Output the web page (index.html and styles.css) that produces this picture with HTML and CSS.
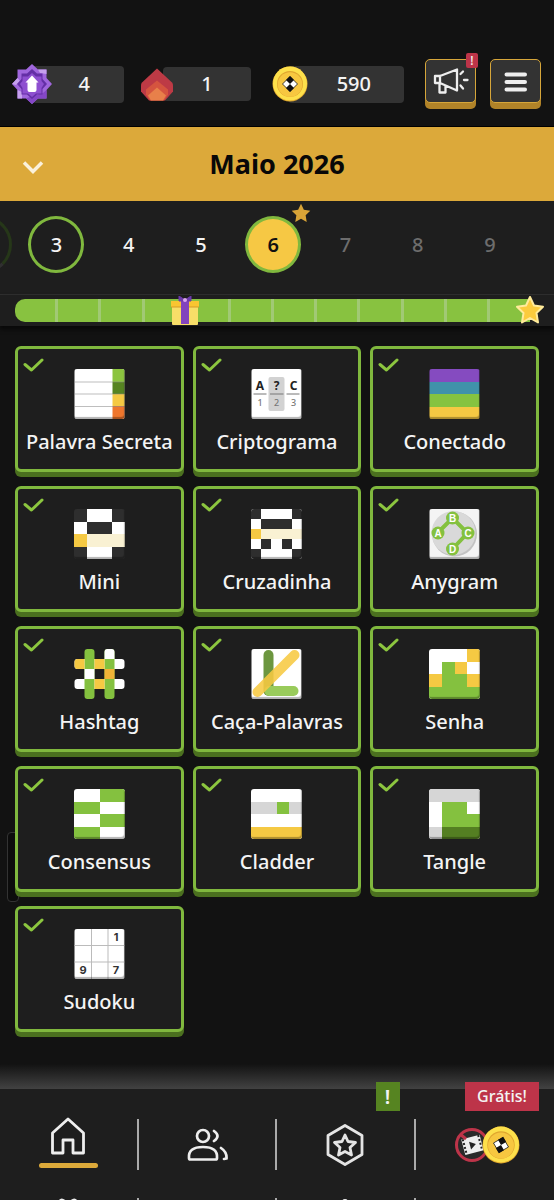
FILE: index.html
```html
<!DOCTYPE html>
<html lang="pt">
<head>
<meta charset="utf-8">
<meta name="viewport" content="width=device-width, initial-scale=1">
<title>Maio 2026</title>
<link rel="stylesheet" href="styles.css">
</head>
<body>
<svg class="defs" aria-hidden="true">
  <symbol id="check" viewBox="0 0 21 14"><path d="M2 6.500 L8.500 12 L19 2" fill="none" stroke="#8cc63f" stroke-width="3" stroke-linecap="round" stroke-linejoin="round"/></symbol>
  <symbol id="coin" viewBox="0 0 36 36">
    <circle cx="18" cy="18" r="17.500" fill="#dfa62d"/><circle cx="18" cy="17.500" r="17" fill="#fde04b"/>
    <circle cx="18" cy="18" r="13" fill="#e0a62f"/><circle cx="18" cy="18.500" r="12.300" fill="#f7c740"/>
  </symbol>
  <symbol id="star" viewBox="0 0 28 28"><path d="M14 1 L18 9.500 L27 10.700 L20.500 17 L22 26.500 L14 22 L6 26.500 L7.500 17 L1 10.700 L10 9.500Z" stroke-linejoin="round"/></symbol>
</svg>
<div class="app">
  <header class="topbar">
    <div class="stat">
      <svg class="stat-icon wide" viewBox="0 0 40 40"><path d="M20 0 L26 5.500 H34.500 V14 L40 20 L34.500 26 V34.500 H26 L20 40 L14 34.500 H5.500 V26 L0 20 L5.500 14 V5.500 H14Z" fill="#a066dd"/><path d="M34.500 26 V34.500 H26 L20 40 L14 34.500 L20 32 L31 29Z" fill="#8547c7"/><path d="M26 5.500 H34.500 V10 L28 9Z M5.500 26 V34.500 H10 L10 28Z M0 20 L5.500 14 L8 17 L4 21Z" fill="#c6a0ee"/><path d="M20 5 L25 9.500 H30.500 V15 L35 20 L30.500 25 V30.500 H25 L20 35 L15 30.500 H9.500 V25 L5 20 L9.500 15 V9.500 H15Z" fill="#642fa6"/><path d="M20 9 L24 12.500 H29.500 V17 L32 20 L29.500 24 V29.500 H24 L20 33 L16 29.500 H10.500 V24 L8 20 L10.500 17 V12.500 H16Z" fill="#8e4fd0"/><path d="M20 11.500 L26.500 18.500 H24.500 V26 Q24.500 28 22.500 28 H17.500 Q15.500 28 15.500 26 V18.500 H13.500Z" fill="#fff"/></svg>
      <span class="stat-value">4</span>
    </div>
    <div class="stat short">
      <svg class="stat-icon" viewBox="0 0 32 32"><path d="M16 0 L31 14 Q32 15 32 17 V23 L24 32 H8 L0 23 V17 Q0 15 1 14Z" fill="#bd3a45"/><path d="M16 12 L27 21 V26 L23 32 H9 L5 26 V21Z" fill="#d5543f"/><path d="M16 19 L25 27 L22 32 H10 L7 27Z" fill="#e8804a"/></svg>
      <span class="stat-value">1</span>
    </div>
    <div class="stat large">
      <svg class="stat-icon" viewBox="0 0 36 36"><use href="#coin"/><path d="M18 10.500 L25.500 18 L18 25.500 L10.500 18Z" fill="#fff" stroke="#111" stroke-width=".8"/><path d="M18 10 L22 14 L18 18 L14 14Z M18 18 L22 22 L18 26 L14 22Z" fill="#111"/></svg>
      <span class="stat-value">590</span>
    </div>
    <div class="actions">
      <button class="square" aria-label="Novidades">
        <svg viewBox="0 0 36 28"><g fill="none" stroke="#eee" stroke-width="2.300" stroke-linejoin="round" stroke-linecap="round"><path d="M2 9 H7 V16 H2Z M7 9 L24 2.500 V23.500 L7 16 M6.500 17 V25.500 H12.500 V19"/><path d="M27.500 7 L30 4.500 M31 13 H34.500 M27.500 18.500 L30 21.500"/></g></svg>
        <span class="alert">!</span>
      </button>
      <button class="square" aria-label="Menu">
        <svg viewBox="0 0 36 28"><path d="M8.500 7.500 H27 M8.500 15 H27 M8.500 22.500 H27" stroke="#eee" stroke-width="4" stroke-linecap="round"/></svg>
      </button>
    </div>
  </header>

  <section class="month">
    <button class="month-toggle" aria-label="Abrir calendário"><svg viewBox="0 0 22 15"><path d="M2 2.500 L11 11.500 L20 2.500" fill="none" stroke="#faf1dc" stroke-width="3.500"/></svg></button>
    <h1>Maio 2026</h1>
  </section>

  <nav class="days" aria-label="Dias">
    <button class="day past" aria-label="2"></button>
    <button class="day done">3</button>
    <button class="day">4</button>
    <button class="day">5</button>
    <button class="day today">6<svg class="day-star" viewBox="0 0 28 28"><use href="#star" fill="#d9a437"/></svg></button>
    <button class="day future">7</button>
    <button class="day future">8</button>
    <button class="day future">9</button>
  </nav>

  <section class="progress">
    <div class="bar"><i></i><i></i><i></i><i></i><i></i><i></i><i></i><i></i><i></i><i></i><i></i><i></i></div>
    <svg class="gift" viewBox="0 0 28 30"><path d="M1 9 H27 V28 Q27 29 26 29 H2 Q1 29 1 28Z" fill="#f8de68"/><path d="M0 5 H28 V11 H0Z" fill="#fac531"/><path d="M0 10.500 H28 V11.500 H0Z" fill="#d79a28"/><path d="M10 5 H18 V28 H10Z" fill="#8243bd"/><path d="M14 4 L8 0 V5 H12Z M14 4 L20 0 V5 H16Z" fill="#6c3baa" stroke="#6c3baa" stroke-linejoin="round"/><circle cx="14" cy="4" r="2" fill="#dba6ee"/></svg>
    <svg class="goal" viewBox="0 0 28 28"><use href="#star" fill="#fbcb3d" stroke="#ffeb9b" stroke-width="2"/></svg>
  </section>

  <main class="games">
    <a class="card" href="#"><svg class="check"><use href="#check"/></svg>
      <span class="tile"><svg viewBox="0 0 50 50"><path fill="#fff" d="M0 0H50V50H0z"/><path fill="#8cc43f" d="M38 0H50V13H38z"/><path fill="#568421" d="M38 13H50V25H38z"/><path fill="#f5c943" d="M38 25H50V37H38z"/><path fill="#ee762d" d="M38 37H50V50H38z"/><path d="M0 13H50M0 25H50M0 37.500H50" stroke="#888" stroke-opacity=".55"/></svg></span><span>Palavra Secreta</span></a>
    <a class="card" href="#"><svg class="check"><use href="#check"/></svg>
      <span class="tile"><svg viewBox="0 0 50 50"><path fill="#fff" d="M0 0H50V50H0z"/><rect x="17" y="8" width="16" height="34" rx="2" fill="#d2d2d2"/><path d="M2 25H15M18.500 25H32M35 25H48" stroke="#777"/><g text-anchor="middle" class="glyphs"><text x="8.500" y="21">A</text><text x="25" y="21">?</text><text x="42" y="21">C</text></g><g text-anchor="middle" class="digits"><text x="8.500" y="37">1</text><text x="25" y="37">2</text><text x="42" y="37">3</text></g></svg></span><span>Criptograma</span></a>
    <a class="card" href="#"><svg class="check"><use href="#check"/></svg>
      <span class="tile"><svg viewBox="0 0 50 50"><path fill="#854bc0" d="M0 0H50V13H0z"/><path fill="#4092aa" d="M0 13H50V25H0z"/><path fill="#85c340" d="M0 25H50V38H0z"/><path fill="#f5c943" d="M0 38H50V50H0z"/></svg></span><span>Conectado</span></a>

    <a class="card" href="#"><svg class="check"><use href="#check"/></svg>
      <span class="tile"><svg viewBox="0 0 4 4" preserveAspectRatio="none" shape-rendering="crispEdges"><path fill="#2e2e2e" d="M0 0H4V4H0z"/><path fill="#fff" d="M1 0H3V1H1zM0 1H1V2H0zM3 1H4V2H3zM1 3H3V4H1z"/><path fill="#f5c943" d="M0 2H1V3H0z"/><path fill="#f9f1d3" d="M1 2H4V3H1z"/></svg></span><span>Mini</span></a>
    <a class="card" href="#"><svg class="check"><use href="#check"/></svg>
      <span class="tile"><svg viewBox="0 0 5 5" preserveAspectRatio="none" shape-rendering="crispEdges"><path fill="#fff" d="M0 0H5V5H0z"/><path fill="#2e2e2e" d="M0 0H1V1H0zM4 0H5V1H4zM1 1H4V2H1zM1 3H2V4H1zM3 3H4V4H3zM0 4H1V5H0zM4 4H5V5H4z"/><path fill="#f5c943" d="M0 2H1V3H0z"/><path fill="#f9f1d3" d="M1 2H5V3H1z"/></svg></span><span>Cruzadinha</span></a>
    <a class="card" href="#"><svg class="check"><use href="#check"/></svg>
      <span class="tile"><svg viewBox="0 0 50 50"><path fill="#f4f4f4" d="M0 0H50V50H0z"/><circle cx="25" cy="25" r="22.500" fill="#c3c3c3"/><circle cx="24" cy="24" r="22" fill="#d9d9d9"/><path d="M8 24 L23 9 L38 24 L23 40" fill="none" stroke="#84c13f" stroke-width="4"/><g fill="#84c13f"><circle cx="8.500" cy="24" r="6.500"/><circle cx="23" cy="9" r="6.500"/><circle cx="38.500" cy="24" r="6.500"/><circle cx="23" cy="40" r="6.500"/></g><g text-anchor="middle" class="nodes"><text x="8.500" y="27.500">A</text><text x="23" y="12.500">B</text><text x="38.500" y="27.500">C</text><text x="23" y="43.500">D</text></g></svg></span><span>Anygram</span></a>

    <a class="card" href="#"><svg class="check"><use href="#check"/></svg>
      <span class="tile bare"><svg viewBox="0 0 50 50"><rect y="10" width="50" height="10" rx="3" fill="#fff"/><rect y="30" width="50" height="10" rx="3" fill="#fff"/><rect x="10" width="10" height="50" rx="3" fill="#84c13f"/><rect x="30" width="10" height="50" rx="3" fill="#84c13f"/><path fill="#fff" d="M10 20H20V30H10zM30 10V3Q30 0 33 0H37Q40 0 40 3V10z"/><path fill="#f5c943" d="M10 10H3Q0 10 0 13V17Q0 20 3 20H10zM20 10H30V20H20zM20 30H30V40H20z"/><path fill="#f0b437" d="M30 20H40V30H30z"/></svg></span><span>Hashtag</span></a>
    <a class="card" href="#"><svg class="check"><use href="#check"/></svg>
      <span class="tile"><svg viewBox="0 0 50 50"><path fill="#fff" d="M0 0H50V50H0z"/><g fill="none" stroke-linecap="round" stroke-width="10"><path d="M17 6V42" stroke="#6c963f"/><path d="M18 42H42" stroke="#99cb5b"/><path d="M6 43L43 6" stroke="#f7c942" stroke-opacity=".88"/></g></svg></span><span>Caça-Palavras</span></a>
    <a class="card" href="#"><svg class="check"><use href="#check"/></svg>
      <span class="tile"><svg viewBox="0 0 4 4" preserveAspectRatio="none" shape-rendering="crispEdges"><path fill="#fff" d="M0 0H4V4H0z"/><path fill="#f5c943" d="M3 0H4V1H3zM2 1H3V2H2zM0 2H1V3H0zM3 2H4V3H3z"/><path fill="#84c13f" d="M1 1H2V2H3V3H4V4H0V3H1z"/></svg></span><span>Senha</span></a>

    <a class="card" href="#"><svg class="check"><use href="#check"/></svg>
      <span class="tile"><svg viewBox="0 0 4 4" preserveAspectRatio="none" shape-rendering="crispEdges"><path fill="#fff" d="M0 0H4V4H0z"/><path fill="#84c13f" d="M2 0H4V1H2zM0 1H2V2H0zM2 2H4V3H2zM0 3H2V4H0z"/></svg></span><span>Consensus</span></a>
    <a class="card" href="#"><svg class="check"><use href="#check"/></svg>
      <span class="tile"><svg viewBox="0 0 4 4" preserveAspectRatio="none" shape-rendering="crispEdges"><path fill="#fff" d="M0 0H4V4H0z"/><path fill="#d6d6d6" d="M0 1H4V2H0z"/><path fill="#84c13f" d="M2 1H3V2H2z"/><path fill="#f5c943" d="M0 3H4V4H0z"/></svg></span><span>Cladder</span></a>
    <a class="card" href="#"><svg class="check"><use href="#check"/></svg>
      <span class="tile"><svg viewBox="0 0 4 4" preserveAspectRatio="none" shape-rendering="crispEdges"><path fill="#fff" d="M0 0H4V4H0z"/><path fill="#d6d6d6" d="M0 0H4V1H0zM0 3H1V4H0z"/><path fill="#84c13f" d="M1 1H3V2H4V3H1z"/><path fill="#547f22" d="M1 3H4V4H1z"/></svg></span><span>Tangle</span></a>

    <a class="card" href="#"><svg class="check"><use href="#check"/></svg>
      <span class="tile"><svg viewBox="0 0 50 50"><path fill="#fff" d="M0 0H50V50H0z"/><path d="M17 0V50M33.500 0V50M0 16.500H50M0 33H50" stroke="#bbb"/><g text-anchor="middle" class="cells"><text x="41.500" y="12">1</text><text x="8.500" y="45">9</text><text x="41.500" y="45">7</text></g></svg></span><span>Sudoku</span></a>
    <button class="drawer" aria-label="Abrir painel"></button>
  </main>

  <footer class="dock">
    <div class="fade"></div>
    <nav class="tabs">
      <a class="tab active" href="#" aria-label="Início"><svg viewBox="0 0 42 42"><path d="M5.500 37 V17 L21 3 L36.500 17 V37 H26 V24 H16 V37Z" fill="none" stroke="#eee" stroke-width="2.800" stroke-linejoin="round"/></svg></a>
      <a class="tab" href="#" aria-label="Amigos"><svg viewBox="0 0 42 42"><g fill="none" stroke="#eee" stroke-width="2.700" stroke-linecap="round"><circle cx="17" cy="12" r="6"/><path d="M3 34 Q2 23 17 23 Q32 23 31 34 Q31 35.500 29.500 35.500 H4.500 Q3 35.500 3 34Z"/><path d="M28 7 Q35 12 28 17 M35 24 Q41 28 40.500 34.500 L38 35"/></g></svg></a>
      <a class="tab" href="#" aria-label="Conquistas"><svg viewBox="0 0 42 42"><g fill="none" stroke="#e4e4e4" stroke-width="2.800" stroke-linejoin="round"><path d="M21 1.500 L38 11.500 V30.500 L21 40.500 L4 30.500 V11.500Z"/><path d="M21 11 L24 17.500 L31.500 18.500 L26 23.500 L27.500 31 L21 27.500 L14.500 31 L16 23.500 L10.500 18.500 L18 17.500Z"/></g></svg><span class="tag green">!</span></a>
      <a class="tab promo" href="#" aria-label="Sem anúncios"><svg viewBox="0 0 66 40"><circle cx="18" cy="20" r="15.500" fill="#292929" stroke="#bd3449" stroke-width="3"/><g transform="rotate(-15 18 20)"><path fill="#eee" d="M9 12H28V28H9z"/><path d="M10.500 12V28M26.500 12V28" stroke="#222" stroke-width="2" stroke-dasharray="2 2"/><path fill="#222" d="M16 16L22 20L16 24z"/></g><path d="M6 9L12 14" stroke="#bd3449" stroke-width="3"/><use href="#coin" x="28" y="1" width="38" height="38"/><g transform="translate(47 20) rotate(-30)"><path fill="#fff" stroke="#111" stroke-width=".7" d="M-5.500-5.500H5.500V5.500H-5.500z"/><path fill="#111" d="M0-6H6V0H0zM-6 0H0V6H-6z"/></g></svg><span class="tag red">Grátis!</span></a>
    </nav>
    <div class="peek" aria-hidden="true"><div><svg viewBox="0 0 20 4"><path d="M1 4Q3-1 8 4M12 4Q17-1 19 4" fill="none" stroke="#eee" stroke-width="2"/></svg></div><div></div><div><svg viewBox="0 0 20 4"><circle cx="10" cy="4" r="3" fill="#eee"/></svg></div><div></div></div>
  </footer>
</div>
</body>
</html>
```
FILE: styles.css
```css
* { box-sizing: border-box; }

body {
  margin: 0;
  background: #121212;
  color: #f4f4f4;
  font-family: "Noto Sans", "Open Sans", sans-serif;
  font-size: 20px;
  font-weight: 500;
}

button { padding: 0; border: 0; background: none; color: inherit; font: inherit; }
a { color: inherit; text-decoration: none; }
svg { display: block; }
.defs { position: absolute; width: 0; height: 0; }

.app { display: flex; flex-direction: column; height: 100vh; overflow: hidden; }

.topbar {
  display: flex;
  align-items: center;
  gap: 21px;
  padding: 59px 13px 17px 12px;
  border-bottom: 1px solid #000;
}
.stat { display: flex; align-items: center; flex: 112 1 0; }
.stat.short { flex-grow: 109; margin-left: -4px; }
.stat.large { flex-grow: 132; }
.stat-icon { position: relative; flex: none; width: 36px; height: 36px; }
.stat-icon.wide { width: 40px; height: 40px; }
.short .stat-icon { width: 32px; height: 33px; }
.stat-value {
  flex: 1;
  height: 37px;
  margin-left: -20px;
  padding-left: 12px;
  border-radius: 4px;
  background: #333;
  line-height: 35px;
  text-align: center;
}
.short .stat-value { height: 34px; margin-left: -10px; padding-left: 0; line-height: 34px; }
.large .stat-value { padding-left: 16px; }
.actions { display: flex; gap: 14px; }
.square {
  position: relative;
  display: grid;
  place-items: center;
  width: 51px;
  height: 44px;
  margin-bottom: 6px;
  border: 1px solid #d6a63a;
  border-radius: 5px;
  background: #333;
  box-shadow: 0 6px 0 #b18328;
}
.square svg { width: 36px; height: 28px; }
.alert {
  position: absolute;
  top: -7px;
  right: -3px;
  width: 12px;
  height: 15px;
  border-radius: 2px;
  background: #bd3449;
  font-size: 12px;
  line-height: 15px;
}

.month {
  display: grid;
  grid-template-columns: 66px 1fr 66px;
  align-items: center;
  height: 74px;
  flex: none;
  background: #dca93a;
}
.month-toggle { justify-self: center; }
.month-toggle svg { width: 22px; height: 15px; margin-top: 6px; }
.month h1 { margin: 0; color: #080808; font-size: 27px; font-weight: 700; line-height: 36px; text-align: center; }

.days {
  display: flex;
  flex: none;
  height: 94px;
  padding: 15px 28px 0 0;
  margin-left: -52px;
  background: #1e1e1e;
  border-bottom: 1px solid #303030;
}
.day { position: relative; flex: 1; height: 57px; line-height: 57px; }
.day.past::before, .day.done::before, .day.today::before {
  content: "";
  position: absolute;
  z-index: 0;
  inset: 0 calc(50% - 28px);
  border: 3px solid #80b83e;
  border-radius: 50%;
}
.day.past::before { border-color: #263719 #263719 #303030; }
.day.today { color: #111; font-weight: 600; isolation: isolate; }
.day.today::before { z-index: -1; background: #f6c844; }
.day.future { color: #6d6d6d; }
.day-star { position: absolute; top: -13px; left: calc(50% + 18px); width: 20px; height: 20px; }

.progress {
  position: relative;
  flex: none;
  padding: 4px 24px 4px 15px;
  background: #1e1e1e;
  box-shadow: 0 3px 4px #080808;
}
.bar { display: flex; height: 23px; overflow: hidden; border-radius: 10px 0 0 10px; background: #88c240; }
.bar i { flex: 1; border-right: 3px solid #a1c975; }
.bar i:last-child { border: 0; }
.gift { position: absolute; top: 1px; left: calc(33.33% - 14px); width: 28px; height: 30px; }
.goal { position: absolute; top: 1px; right: 10px; width: 28px; height: 28px; }

.games {
  position: relative;
  display: grid;
  grid-template-columns: repeat(3, 1fr);
  align-content: start;
  flex: 1;
  gap: 14px 9px;
  min-height: 0;
  padding: 20px 15px;
}
.card {
  position: relative;
  z-index: 1;
  display: flex;
  flex-direction: column;
  align-items: center;
  gap: 7px;
  height: 126px;
  padding-top: 20px;
  border: 3px solid #80b83e;
  border-radius: 6px;
  background: #1e1e1e;
  box-shadow: 0 5px 0 #4b701f;
  line-height: 32px;
  white-space: nowrap;
}
.check { position: absolute; top: 9px; left: 5px; width: 21px; height: 14px; }
.tile { position: relative; width: 51px; height: 50px; overflow: hidden; border-radius: 3px; }
.tile svg { width: 100%; height: 100%; }
.tile::after { content: ""; position: absolute; inset: 0; border-radius: 3px; box-shadow: inset -1px -2px 1px rgba(0, 0, 0, .3); }
.tile.bare::after { display: none; }
.glyphs { fill: #222; font-size: 12px; font-weight: 700; }
.digits { fill: #777; font-size: 9px; }
.nodes { fill: #fff; font-family: "Liberation Sans", sans-serif; font-size: 10px; font-weight: 700; }
.cells { fill: #333; font-family: Inter, sans-serif; font-size: 11px; font-weight: 700; }
.drawer {
  position: absolute;
  bottom: 162px;
  left: 7px;
  width: 12px;
  height: 70px;
  border: 1px solid #333;
  border-radius: 4px;
  background: #0c0c0c;
}

.dock { position: relative; z-index: 2; flex: none; background: #1e1e1e; }
.fade { height: 25px; background: linear-gradient(#121212, #424242); }
.tabs { display: grid; grid-template-columns: repeat(4, 1fr); padding: 30px 0 28px; }
.tab { position: relative; display: grid; place-items: center; height: 51px; border-right: 2px solid #aaa; }
.tab:last-child { border: 0; }
.tab svg { width: 42px; height: 42px; }
.tab.active { align-items: start; }
.tab.active svg { margin-top: -3px; }
.tab.active::after { content: ""; position: absolute; bottom: 2px; width: 59px; height: 5px; border-radius: 3px; background: #dca93a; }
.tab.promo { padding-left: 4px; }
.tab.promo svg { width: 66px; height: 40px; }
.tag { position: absolute; top: -37px; height: 29px; line-height: 29px; text-align: center; }
.tag.green { right: 14px; width: 24px; background: #568421; font-weight: 600; }
.tag.red { right: 15px; width: 74px; background: #bd3449; font-size: 16px; }
.peek { display: grid; grid-template-columns: repeat(4, 1fr); height: 2px; overflow: hidden; }
.peek div { display: grid; justify-content: center; border-right: 2px solid #aaa; }
.peek div:last-child { border: 0; }
.peek svg { width: 20px; height: 4px; }
```
